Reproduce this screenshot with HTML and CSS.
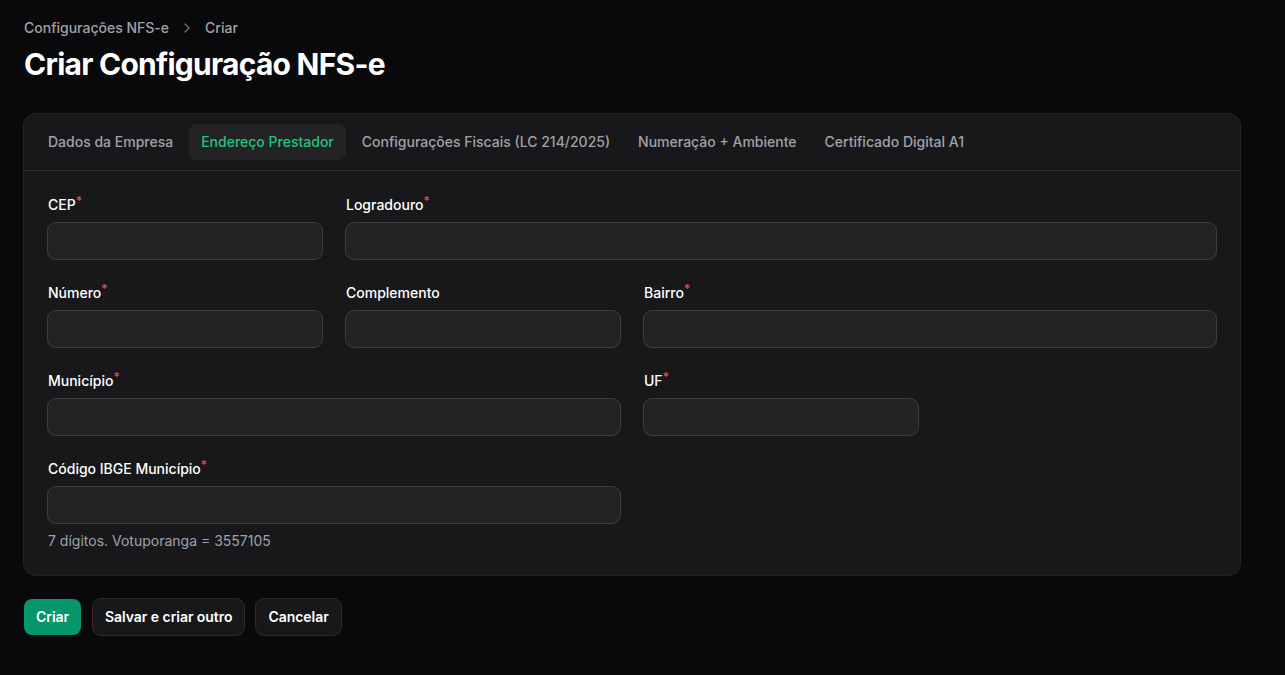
FILE: index.html
```html
<!DOCTYPE html>
<html lang="pt-BR">
<head>
<meta charset="utf-8">
<title>Criar Configuração NFS-e</title>
<link rel="stylesheet" href="styles.css">
</head>
<body>
<main class="page">
  <header class="header">
    <nav class="breadcrumbs">
      <span class="crumb">Configurações NFS-e</span>
      <svg class="chev" viewBox="0 0 20 20" width="16" height="16" aria-hidden="true"><path d="M7.5 5l5 5-5 5" fill="none" stroke="currentColor" stroke-width="1.6" stroke-linecap="round" stroke-linejoin="round"/></svg>
      <span class="crumb">Criar</span>
    </nav>
    <h1 class="title">Criar Configuração NFS-e</h1>
  </header>

  <section class="card">
    <nav class="tabs">
      <span class="tab">Dados da Empresa</span>
      <span class="tab tab-active">Endereço Prestador</span>
      <span class="tab">Configurações Fiscais (LC 214/2025)</span>
      <span class="tab">Numeração + Ambiente</span>
      <span class="tab">Certificado Digital A1</span>
    </nav>
    <div class="form">
      <div class="field span-1">
        <label class="label">CEP<sup class="req">*</sup></label>
        <div class="input"></div>
      </div>
      <div class="field span-3">
        <label class="label">Logradouro<sup class="req">*</sup></label>
        <div class="input"></div>
      </div>
      <div class="field span-1">
        <label class="label">Número<sup class="req">*</sup></label>
        <div class="input"></div>
      </div>
      <div class="field span-1">
        <label class="label">Complemento</label>
        <div class="input"></div>
      </div>
      <div class="field span-2">
        <label class="label">Bairro<sup class="req">*</sup></label>
        <div class="input"></div>
      </div>
      <div class="field span-2">
        <label class="label">Município<sup class="req">*</sup></label>
        <div class="input"></div>
      </div>
      <div class="field span-1">
        <label class="label">UF<sup class="req">*</sup></label>
        <div class="input"></div>
      </div>
      <div class="field span-2 row-start">
        <label class="label">Código IBGE Município<sup class="req">*</sup></label>
        <div class="input"></div>
        <p class="hint">7 dígitos. Votuporanga = 3557105</p>
      </div>
    </div>
  </section>

  <div class="actions">
    <button class="btn btn-primary">Criar</button>
    <button class="btn">Salvar e criar outro</button>
    <button class="btn">Cancelar</button>
  </div>
</main>
</body>
</html>
```

FILE: styles.css
```css
* { box-sizing: border-box; }
html, body { margin: 0; padding: 0; }
body {
  background: #09090b;
  color: #fff;
  font-family: Inter, "Noto Sans", "Liberation Sans", sans-serif;
  font-size: 14px;
  line-height: 20px;
}
.page {
  padding: 18px 45px 24px 24px;
  display: flex;
  flex-direction: column;
}
.header {
  display: flex;
  flex-direction: column;
  gap: 8px;
}
.breadcrumbs {
  display: flex;
  align-items: center;
  gap: 10px;
  color: #a1a1aa;
  font-weight: 500;
}
.chev { color: #71717a; }
.title {
  margin: 0;
  font-size: 30px;
  line-height: 36px;
  font-weight: 700;
  letter-spacing: -0.75px;
}
.card {
  margin-top: 32px;
  background: #18181b;
  border-radius: 12px;
  box-shadow: 0 0 0 1px rgba(255,255,255,0.1);
}
.tabs {
  display: flex;
  gap: 4px;
  padding: 10px 12px;
  border-bottom: 1px solid rgba(255,255,255,0.1);
}
.tab {
  padding: 8px 12px;
  border-radius: 8px;
  color: #a1a1aa;
  font-weight: 500;
  white-space: nowrap;
}
.tab-active {
  background: rgba(255,255,255,0.05);
  color: #22c47e;
}
.form {
  padding: 24px 24px 24px;
  display: grid;
  grid-template-columns: repeat(4, 1fr);
  column-gap: 24px;
  row-gap: 24px;
}
.field { display: flex; flex-direction: column; gap: 8px; }
.span-1 { grid-column: span 1; }
.span-2 { grid-column: span 2; }
.span-3 { grid-column: span 3; }
.row-start { grid-column: 1 / span 2; }
.label {
  font-weight: 500;
  color: #fff;
}
.req {
  color: #f0435a;
  font-weight: 500;
  font-size: 12px;
  line-height: 0;
  vertical-align: 5px;
  margin-left: 0;
}
.input {
  height: 36px;
  background: #232326;
  border-radius: 8px;
  box-shadow: 0 0 0 1px rgba(255,255,255,0.16);
}
.hint {
  margin: 0;
  color: #9ca3af;
}
.actions {
  margin-top: 24px;
  display: flex;
  gap: 12px;
}
.btn {
  font: inherit;
  font-weight: 600;
  color: #fff;
  background: #18181b;
  border: none;
  border-radius: 8px;
  padding: 8px 12px;
  line-height: 20px;
  letter-spacing: -0.05px;
  box-shadow: 0 0 0 1px rgba(255,255,255,0.14);
  cursor: pointer;
}
.btn-primary {
  background: #059669;
  box-shadow: none;
}
```
